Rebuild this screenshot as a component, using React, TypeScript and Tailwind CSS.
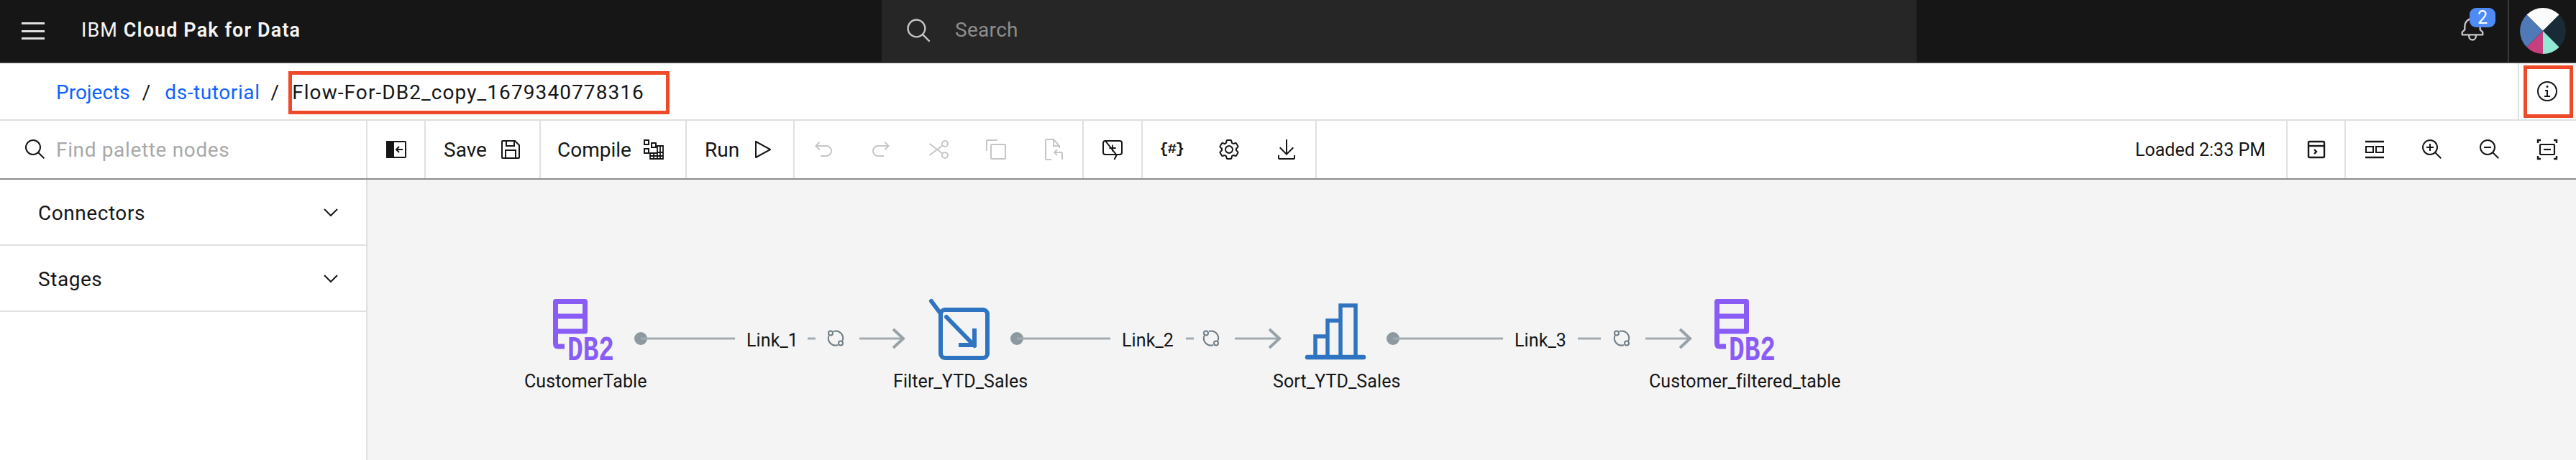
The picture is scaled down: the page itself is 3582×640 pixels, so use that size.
import React from "react";

const C = ({ children, color = "#161616", size = 32 }: { children: React.ReactNode; color?: string; size?: number }) => (
  <svg width={size} height={size} viewBox="0 0 32 32" fill={color} className="shrink-0">{children}</svg>
);
const S = ({ children, color = "#161616" }: { children: React.ReactNode; color?: string }) => (
  <svg width={32} height={32} viewBox="0 0 32 32" fill="none" stroke={color} strokeWidth={2} className="shrink-0">{children}</svg>
);

const Chevron = () => (
  <svg width={20} height={11} viewBox="0 0 20 11" fill="none" stroke="#161616" strokeWidth={2}><path d="M1 1l9 9 9-9" /></svg>
);

const SearchPath = "M29,27.5859l-7.5521-7.5521a11.0177,11.0177,0,1,0-1.4141,1.4141L27.5859,29ZM4,13a9,9,0,1,1,9,9A9.01,9.01,0,0,1,4,13Z";
const DIS = "#c6c6c6";

function Cell({ children }: { children: React.ReactNode }) {
  return <div className="w-20 h-full flex items-center justify-center shrink-0">{children}</div>;
}

function Db2({ x }: { x: number }) {
  const c = "#8a5cf6";
  return (
    <g transform={`translate(${x} 0)`}>
      <path d="M772.5 461V419.5H813.5V461H772.5M772.5 440H813.5M772.5 461V478Q772.5 482 776 482H785" fill="none" stroke={c} strokeWidth={7} strokeLinejoin="round" />
      <text x={789} y={501} fontFamily="'Liberation Mono', monospace" fontWeight={700} fontSize={48} fill={c} textLength={65} lengthAdjust="spacingAndGlyphs">DB2</text>
    </g>
  );
}

function Refresh({ cx }: { cx: number }) {
  const s = "#6f7d85";
  return (
    <g fill="none" stroke={s} strokeWidth={2}>
      <path d={`M${cx - 3} 461A10 10 0 0 1 ${cx + 9.5} 474`} />
      <path d={`M${cx + 3} 480A10 10 0 0 1 ${cx - 9.5} 467`} />
      <circle cx={cx - 7} cy={463.5} r={3} />
      <circle cx={cx + 7} cy={477.5} r={3} />
    </g>
  );
}

function Conn({ c, lineEnd, dash, ref1, a0, a1 }: { c: number; lineEnd: number; dash: [number, number]; ref1: number; a0: number; a1: number }) {
  const g = "#a2abb1";
  return (
    <g>
      <circle cx={c} cy={471} r={9} fill="#8c999f" />
      <path d={`M${c} 471H${lineEnd}M${dash[0]} 471H${dash[1]}M${a0} 471H${a1}`} stroke={g} strokeWidth={3} fill="none" />
      <path d={`M${a1 - 14} 458L${a1} 471L${a1 - 14} 484`} stroke="#98a3a9" strokeWidth={4} fill="none" />
      <Refresh cx={ref1} />
    </g>
  );
}

const Node = ({ className, children }: { className: string; children: React.ReactNode }) => (
  <div className={`absolute whitespace-nowrap text-[25px] leading-[32px] tracking-[0.1px] text-[#161616] ${className}`}>{children}</div>
);

export default function App() {
  return (
    <div className="w-[3582px] h-[640px] overflow-hidden bg-white flex flex-col font-['Roboto',sans-serif] text-[#161616]">
      {/* Header */}
      <header className="h-[88px] shrink-0 flex bg-[#161616] border-b-2 border-[#393939] text-white">
        <div className="w-[1226px] shrink-0 flex items-center pl-[30px]">
          <div className="w-8 h-6 flex flex-col justify-between">
            <div className="h-[3px] bg-[#e0e0e0]" />
            <div className="h-[3px] bg-[#e0e0e0]" />
            <div className="h-[3px] bg-[#e0e0e0]" />
          </div>
          <div className="ml-[51px] pb-[2px] text-[27px] tracking-[1.1px] whitespace-nowrap text-[#f4f4f4]">
            IBM <span className="font-semibold">Cloud Pak for Data</span>
          </div>
        </div>
        <div className="w-[1439px] shrink-0 bg-[#262626] flex items-center pl-[33px]">
          <svg width={38} height={38} viewBox="0 0 32 32" fill="#c6c6c6"><path d={SearchPath} /></svg>
          <span className="ml-[31px] pb-[2px] text-[28px] tracking-[0.3px] text-[#8d8d8d]">Search</span>
        </div>
        <div className="flex-1 flex justify-end">
          <div className="relative w-[38px] h-full mr-[31px]">
            <div className="mt-[21px] ml-[1px]"><C color="#c6c6c6" size={38}><path d="M28.707 19.293 26 16.586V13a10.014 10.014 0 0 0-9-9.95V1h-2v2.05A10.014 10.014 0 0 0 6 13v3.586l-2.707 2.707A1 1 0 0 0 3 20v3a1 1 0 0 0 1 1h7v.777a5.152 5.152 0 0 0 4.5 5.199A5.006 5.006 0 0 0 21 25v-1h7a1 1 0 0 0 1-1v-3a1 1 0 0 0-.293-.707ZM19 25a3 3 0 0 1-6 0v-1h6Zm8-3H5v-1.586l2.707-2.707A1 1 0 0 0 8 17v-4a8 8 0 0 1 16 0v4a1 1 0 0 0 .293.707L27 20.414Z" /></C></div>
            <div className="absolute left-[16px] top-[11px] w-9 h-[27px] rounded-[9px] bg-[#4f8bf7] text-white text-[25px] leading-[27px] text-center">2</div>
          </div>
          <div className="w-[95px] h-full border-l-2 border-[#393939] flex items-center justify-center">
            <svg width={64} height={64} viewBox="-32 -32 64 64">
              <path d="M0 0L-22.6 -22.6A32 32 0 0 1 22.6 -22.6Z" fill="#fbfbfb" />
              <path d="M0 0L22.6 -22.6A32 32 0 0 1 22.6 22.6Z" fill="#1a2b38" />
              <path d="M0 0L22.6 22.6A32 32 0 0 1 0 32Z" fill="#90e8d5" />
              <path d="M0 0L0 32A32 32 0 0 1 -22.6 22.6Z" fill="#c83e7e" />
              <path d="M0 0L-22.6 22.6A32 32 0 0 1 -22.6 -22.6Z" fill="#4f79b7" />
            </svg>
          </div>
        </div>
      </header>

      {/* Breadcrumb */}
      <div className="h-[80px] shrink-0 flex items-center border-b-2 border-[#e0e0e0]">
        <div className="flex-1 flex items-center pl-[78px] pt-[4px] text-[28px] whitespace-nowrap">
          <span className="text-[#0f62fe]">Projects</span>
          <span className="ml-[17px]">/</span>
          <span className="ml-[20px] tracking-[0.6px] text-[#0f62fe]">ds-tutorial</span>
          <span className="ml-[15px]">/</span>
          <span className="ml-[13px] h-[60px] w-[530px] border-[5px] border-[#ee4a2a] flex items-center tracking-[1.08px]">Flow-For-DB2_copy_1679340778316</span>
        </div>
        <div className="w-[81px] h-full border-l-2 border-[#e0e0e0] flex items-center pl-[6px]">
          <div className="w-[69px] h-[73px] border-[5px] border-[#ee4a2a] flex items-center justify-center pr-[3px]">
            <C size={32}>
              <path d="M17 22v-8h-4v2h2v6h-3v2h8v-2h-3z" />
              <path d="M16 8a1.5 1.5 0 1 0 1.5 1.5A1.5 1.5 0 0 0 16 8z" />
              <path d="M16 30a14 14 0 1 1 14-14 14 14 0 0 1-14 14Zm0-26a12 12 0 1 0 12 12A12 12 0 0 0 16 4Z" />
            </C>
          </div>
        </div>
      </div>

      {/* Toolbar */}
      <div className="h-[82px] shrink-0 flex border-b-2 border-[#8d8d8d] text-[28px] whitespace-nowrap">
        <div className="w-[511px] shrink-0 border-r-2 border-[#e0e0e0] flex items-center pl-[33px]">
          <C><path d={SearchPath} /></C>
          <span className="ml-[13px] pt-[2px] tracking-[0.65px] text-[#a8a8a8]">Find palette nodes</span>
        </div>
        <div className="w-[81px] shrink-0 border-r-2 border-[#e0e0e0] flex items-center justify-center">
          <S>
            <rect x="3" y="5" width="26" height="22" rx="1" />
            <rect x="3" y="5" width="9" height="22" fill="#161616" />
            <path d="M25 16H16M20 12l-4 4 4 4" />
          </S>
        </div>
        <div className="w-[160px] shrink-0 border-r-2 border-[#e0e0e0] flex items-center pl-[25px]">
          <span className="pt-[2px]">Save</span>
          <span className="ml-[17px]">
            <S>
              <path d="M5 4H22L28 10V27Q28 28 27 28H5Q4 28 4 27V5Q4 4 5 4Z" />
              <path d="M10 4V11H21V4M9 28V17H23V28" />
            </S>
          </span>
        </div>
        <div className="w-[203px] shrink-0 border-r-2 border-[#e0e0e0] flex items-center pl-[23px]">
          <span className="pt-[2px]">Compile</span>
          <span className="ml-[15px]">
            <S>
              <rect x="3" y="3" width="6" height="6" />
              <rect x="13" y="7" width="6" height="6" />
              <rect x="3" y="15" width="6" height="6" />
              <path d="M21 11H29V29H11V21H21ZM21 11V29M11 25H29M16 21V29M21 20H29M25 11V29" strokeWidth={1.8} />
            </S>
          </span>
        </div>
        <div className="w-[150px] shrink-0 border-r-2 border-[#e0e0e0] flex items-center pl-[25px]">
          <span className="pt-[2px]">Run</span>
          <span className="ml-[16px]">
            <C><path d="M7 28a1 1 0 0 1-1-1V5a1 1 0 0 1 1.482-.876l20 11a1 1 0 0 1 0 1.752l-20 11A1 1 0 0 1 7 28ZM8 6.69v18.62L24.925 16Z" /></C>
          </span>
        </div>
        <div className="shrink-0 border-r-2 border-[#e0e0e0] flex">
          <Cell><C color={DIS}><path d="M20 10H7.815l3.587-3.586L10 5l-6 6 6 6 1.402-1.415L7.818 12H20a6 6 0 0 1 0 12h-8v2h8a8 8 0 0 0 0-16Z" /></C></Cell>
          <Cell><C color={DIS}><path d="M12 10h12.185l-3.587-3.586L22 5l6 6-6 6-1.402-1.415L24.182 12H12a6 6 0 0 0 0 12h8v2h-8a8 8 0 0 1 0-16Z" /></C></Cell>
          <Cell><S color={DIS}>
            <circle cx="25" cy="8" r="4" /><circle cx="25" cy="24" r="4" />
            <path d="M3.5 8L21.5 21.5M3.5 24L21.5 10.5" />
          </S></Cell>
          <Cell><C color={DIS}>
            <path d="M28 10v18H10V10h18m0-2H10a2 2 0 0 0-2 2v18a2 2 0 0 0 2 2h18a2 2 0 0 0 2-2V10a2 2 0 0 0-2-2Z" />
            <path d="M4 18H2V4a2 2 0 0 1 2-2h14v2H4Z" />
          </C></Cell>
          <Cell><S color={DIS}>
            <path d="M13 30H6Q5 30 5 29V3Q5 2 6 2H16L24 11V14M16 2V11H24" />
            <path d="M28 30V21Q28 20 27 20H17M21 16l-4 4 4 4" />
          </S></Cell>
        </div>
        <div className="shrink-0 border-r-2 border-[#e0e0e0] flex">
          <Cell><S>
            <path d="M6 4H26Q29 4 29 7V20Q29 23 26 23H22L18.5 30M21 23H6Q3 23 3 20V7Q3 4 6 4Z" strokeWidth={2} />
            <path d="M16 9.5V18.5M11.5 14H20.5" strokeWidth={1.8} />
          </S></Cell>
        </div>
        <div className="shrink-0 border-r-2 border-[#e0e0e0] flex">
          <Cell><span className="font-['Liberation_Mono',monospace] font-bold text-[21px] tracking-[-1.5px]">{"{#}"}</span></Cell>
          <Cell><C>
            <path d="M27,16.76c0-.25,0-.5,0-.76s0-.51,0-.77l1.92-1.68A2,2,0,0,0,29.3,11L26.94,7a2,2,0,0,0-1.73-1,2,2,0,0,0-.64.1l-2.43.82a11.35,11.35,0,0,0-1.31-.75l-.51-2.52a2,2,0,0,0-2-1.61H13.64a2,2,0,0,0-2,1.61l-.51,2.52a11.48,11.48,0,0,0-1.32.75L7.43,6.06A2,2,0,0,0,6.79,6,2,2,0,0,0,5.06,7L2.7,11a2,2,0,0,0,.41,2.51L5,15.24c0,.25,0,.5,0,.76s0,.51,0,.77L3.11,18.45A2,2,0,0,0,2.7,21L5.06,25a2,2,0,0,0,1.73,1,2,2,0,0,0,.64-.1l2.43-.82a11.35,11.35,0,0,0,1.31.75l.51,2.52a2,2,0,0,0,2,1.61h4.72a2,2,0,0,0,2-1.61l.51-2.52a11.48,11.48,0,0,0,1.32-.75l2.42.82a2,2,0,0,0,.64.1,2,2,0,0,0,1.73-1L29.3,21a2,2,0,0,0-.41-2.51ZM25.21,24l-3.43-1.16a8.86,8.86,0,0,1-2.71,1.57L18.36,28H13.64l-.71-3.55a9.36,9.36,0,0,1-2.7-1.57L6.79,24,4.43,20l2.72-2.4a8.9,8.9,0,0,1,0-3.13L4.43,12,6.79,8l3.43,1.16a8.86,8.86,0,0,1,2.71-1.57L13.64,4h4.72l.71,3.55a9.36,9.36,0,0,1,2.7,1.57L25.21,8,27.57,12l-2.72,2.4a8.9,8.9,0,0,1,0,3.13L27.57,20Z" />
            <path d="M16,22a6,6,0,1,1,6-6A5.94,5.94,0,0,1,16,22Zm0-10a3.91,3.91,0,0,0-4,4,3.91,3.91,0,0,0,4,4,3.91,3.91,0,0,0,4-4A3.91,3.91,0,0,0,16,12Z" />
          </C></Cell>
          <Cell><C><path d="M26 24v4H6v-4H4v4a2 2 0 0 0 2 2h20a2 2 0 0 0 2-2v-4zM26 14l-1.41-1.41L17 20.17V2h-2v18.17l-7.59-7.58L6 14l10 10 10-10z" /></C></Cell>
        </div>
        <div className="flex-1 flex items-center justify-end pr-[29px] border-r-2 border-[#e0e0e0]">
          <span className="pt-[2px] text-[25px]">Loaded 2:33 PM</span>
        </div>
        <div className="w-[81px] shrink-0 border-r-2 border-[#e0e0e0] flex items-center justify-center">
          <S>
            <rect x="5" y="5" width="22" height="22" rx="1.5" strokeWidth={2.4} />
            <path d="M5 11H27" strokeWidth={2.4} />
            <path d="M13 16l3 3-3 3" strokeWidth={2.4} />
          </S>
        </div>
        <div className="flex shrink-0">
          <Cell><S>
            <path d="M3 5H29M3 27H29" strokeWidth={2.4} />
            <rect x="4" y="12" width="10" height="8" />
            <rect x="18" y="12" width="10" height="8" />
          </S></Cell>
          <Cell><C>
            <path d="M18 12h-4V8h-2v4H8v2h4v4h2v-4h4v-2z" />
            <path d="M21.48 20a11 11 0 1 0-1.41 1.41L27.59 29 29 27.59ZM13 22a9 9 0 1 1 9-9 9 9 0 0 1-9 9Z" />
          </C></Cell>
          <Cell><C>
            <path d="M8 12h10v2H8z" />
            <path d="M21.48 20a11 11 0 1 0-1.41 1.41L27.59 29 29 27.59ZM13 22a9 9 0 1 1 9-9 9 9 0 0 1-9 9Z" />
          </C></Cell>
          <Cell><S>
            <path d="M3 7V3H7M25 3H29V7M3 25V29H7M25 29H29V25" strokeWidth={2.4} />
            <rect x="6" y="9" width="20" height="14" rx="1" strokeWidth={2.2} />
            <path d="M11 16H21" strokeWidth={2.2} />
          </S></Cell>
        </div>
      </div>

      {/* Body */}
      <div className="flex-1 flex min-h-0">
        <aside className="w-[511px] shrink-0 border-r-2 border-[#e0e0e0] bg-white text-[28px]">
          <div className="h-[92px] border-b-2 border-[#e0e0e0] flex items-center justify-between pl-[53px] pr-[39px]">
            <span className="pt-[3px] tracking-[0.55px]">Connectors</span><Chevron />
          </div>
          <div className="h-[92px] border-b-2 border-[#e0e0e0] flex items-center justify-between pl-[53px] pr-[39px]">
            <span className="pt-[3px] tracking-[0.55px]">Stages</span><Chevron />
          </div>
        </aside>
        <main className="relative flex-1 bg-[#f4f4f4]">
          <svg width={3071} height={390} viewBox="511 250 3071 390" className="absolute inset-0">
            <Db2 x={0} />
            <Conn c={891} lineEnd={1022} dash={[1123, 1134]} ref1={1162} a0={1195} a1={1256} />
            <g fill="none" stroke="#2f74c0" strokeWidth={6}>
              <rect x="1308" y="431" width="65" height="67" rx="6" />
              <path d="M1295 419L1307 435M1316 441L1355 481" strokeLinecap="round" />
              <path d="M1355 457V480H1333" strokeLinejoin="miter" />
            </g>
            <Conn c={1414} lineEnd={1544} dash={[1649, 1660]} ref1={1684} a0={1717} a1={1779} />
            <g fill="none" stroke="#2f74c0" strokeWidth={5.5}>
              <path d="M1829 497V468H1846V497M1846 468V446H1864V497M1864 446V425H1885V497" />
              <path d="M1818 497H1896" strokeWidth={6.5} strokeLinecap="round" />
            </g>
            <Conn c={1937} lineEnd={2090} dash={[2194, 2226]} ref1={2255} a0={2288} a1={2350} />
            <Db2 x={1615} />
          </svg>
          <Node className="left-[218px] top-[265px]">CustomerTable</Node>
          <Node className="left-[731px] top-[265px]">Filter_YTD_Sales</Node>
          <Node className="left-[1259px] top-[265px]">Sort_YTD_Sales</Node>
          <Node className="left-[1782px] top-[265px]">Customer_filtered_table</Node>
          <Node className="left-[527px] top-[208px]">Link_1</Node>
          <Node className="left-[1049px] top-[208px]">Link_2</Node>
          <Node className="left-[1595px] top-[208px]">Link_3</Node>
        </main>
      </div>
    </div>
  );
}
